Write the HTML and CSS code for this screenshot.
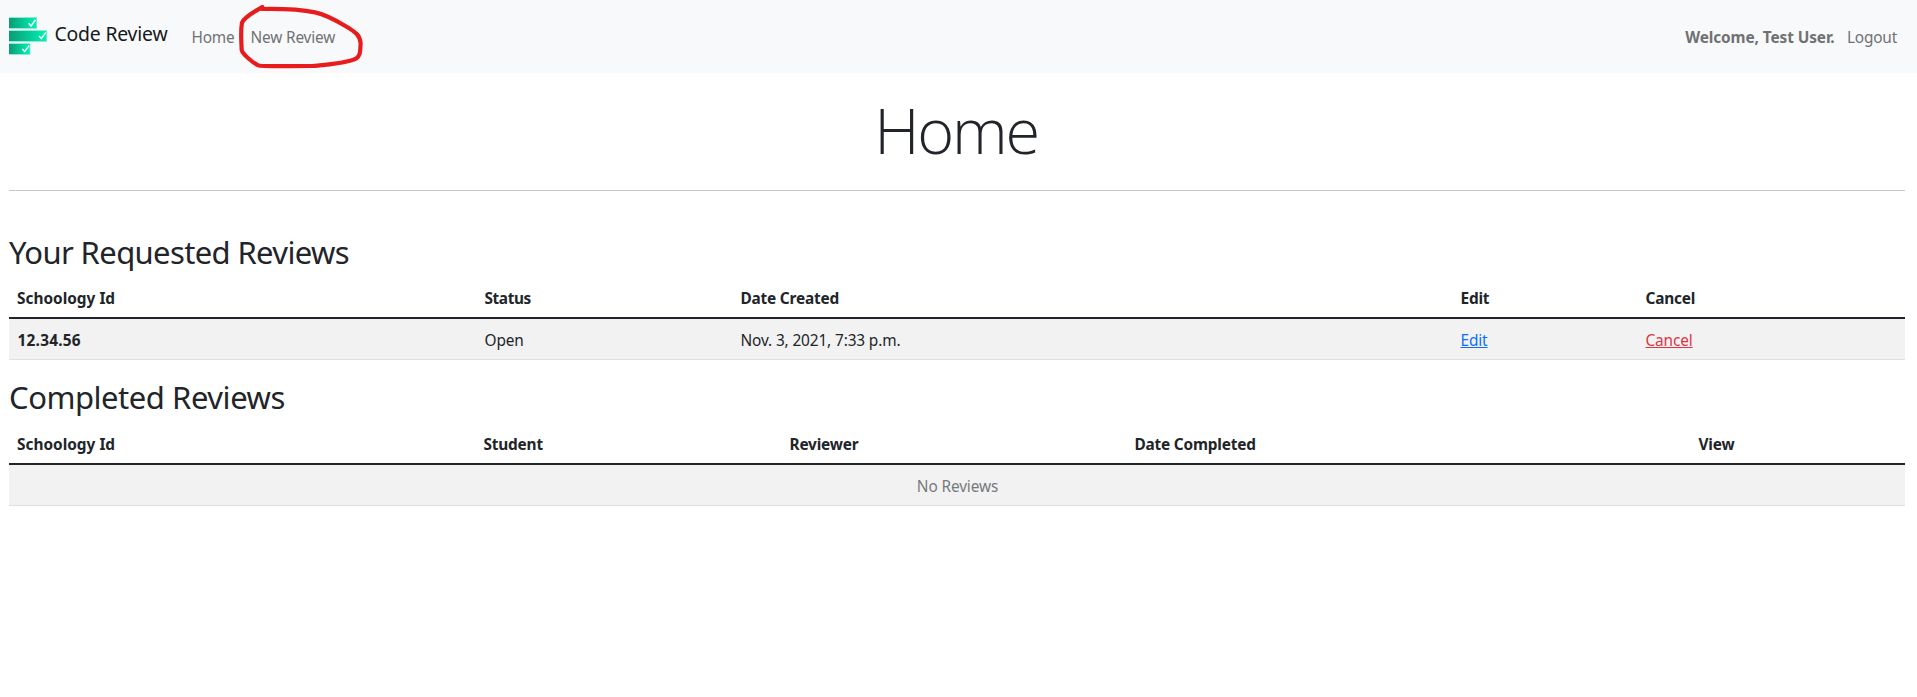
FILE: index.html
```
<!DOCTYPE html>
<html lang="en">
<head>
<meta charset="utf-8">
<title>Code Review</title>
<link rel="stylesheet" href="styles.css">
</head>
<body>
<nav class="navbar">
  <a class="brand" href="#">
    <svg class="logo" width="38" height="38" viewBox="0 0 114 114">
      <defs>
        <linearGradient id="bar"><stop offset="0" stop-color="#0b9b75"/><stop offset="1" stop-color="#00f2b4"/></linearGradient>
      </defs>
      <rect width="84" height="36" fill="#8cebd1"/><rect y="3" width="82" height="30" fill="url(#bar)"/>
      <rect y="39" width="114" height="36" fill="#8cebd1"/><rect y="42" width="112" height="30" fill="url(#bar)"/>
      <rect y="78" width="64" height="36" fill="#8cebd1"/><rect y="81" width="62" height="30" fill="url(#bar)"/>
      <g fill="none" stroke="#fff" stroke-width="4.5">
        <path d="M59 19l7 8 13-18M90 57l7 8 13-18M40 96l7 8 13-18"/>
      </g>
    </svg>
    <span class="brand-name">Code Review</span>
  </a>
  <a class="nav-link nav-home" href="#">Home</a>
  <a class="nav-link nav-new" href="#">New Review
    <svg class="marker" width="130" height="72" viewBox="165 0 390 216">
      <path d="M247 21C225 35 195 48 186 68C181 95 184 120 185 150C188 163 220 190 235 196C245 200 300 198 400 198C430 195 500 190 528 176C543 166 540 150 542 130C540 105 525 95 500 80C470 62 430 42 405 37C370 30 300 26 245 27"/>
    </svg>
  </a>
  <strong class="nav-link welcome">Welcome, Test User.</strong>
  <a class="nav-link logout" href="#">Logout</a>
</nav>
<main class="page">
  <h1 class="title">Home</h1>
  <hr class="rule">
  <section class="requested">
    <h2 class="heading">Your Requested Reviews</h2>
    <table class="table">
      <colgroup><col class="r1"><col class="r2"><col class="r3"><col class="r4"><col></colgroup>
      <thead><tr><th class="wide">Schoology Id</th><th class="tight">Status</th><th>Date Created</th><th>Edit</th><th>Cancel</th></tr></thead>
      <tbody><tr><th class="id">12.34.56</th><td>Open</td><td>Nov. 3, 2021, 7:33 p.m.</td><td><a class="edit" href="#">Edit</a></td><td><a class="cancel" href="#">Cancel</a></td></tr></tbody>
    </table>
  </section>
  <section class="completed">
    <h2 class="heading">Completed Reviews</h2>
    <table class="table">
      <colgroup><col class="c1"><col class="c2"><col class="c3"><col class="c4"><col></colgroup>
      <thead><tr><th class="wide">Schoology Id</th><th>Student</th><th>Reviewer</th><th>Date Completed</th><th>View</th></tr></thead>
      <tbody><tr><td class="empty" colspan="5">No Reviews</td></tr></tbody>
    </table>
  </section>
</main>
</body>
</html>
```
FILE: styles.css
```
* { box-sizing: border-box; }
body {
  margin: 0;
  background: #fff;
  color: #212529;
  font: 15.4px/24px "Noto Sans", sans-serif;
}
.navbar {
  display: flex;
  align-items: flex-start;
  height: 73px;
  padding: 17px 20px 0 9px;
  background: #f8f9fb;
  white-space: nowrap;
}
.navbar a { text-decoration: none; }
.brand {
  display: flex;
  gap: 7.5px;
  width: 182.5px;
  color: #16191c;
}
.logo { flex: none; }
.brand-name {
  padding-top: 2px;
  font-size: 19.4px;
  line-height: 30px;
  letter-spacing: -.2px;
}
.nav-link {
  padding-top: 9px;
  color: #707172;
}
.nav-home { width: 59px; letter-spacing: -.2px; }
.nav-new { position: relative; letter-spacing: -.17px; }
.marker {
  position: absolute;
  left: -15.5px;
  top: -17px;
  fill: none;
  stroke: #e81c1c;
  stroke-width: 12.5;
  stroke-linecap: round;
  stroke-linejoin: round;
  pointer-events: none;
}
.welcome { margin-left: auto; letter-spacing: -.1px; }
.logout { margin-left: 12.5px; letter-spacing: -.2px; }
.page { padding: 18px 12px 0 9px; }
.title {
  margin: 0;
  padding-right: 2px;
  text-align: center;
  font: 300 63px/78px "Open Sans", sans-serif;
  letter-spacing: -2.2px;
}
.rule {
  height: 1px;
  margin: 21px 0 42px;
  border: 0;
  background: #c7c8ca;
}
.heading {
  height: 38px;
  margin: 0 0 6px;
  font-size: 31px;
  font-weight: 400;
  line-height: 38px;
  letter-spacing: -.63px;
}
.completed { margin-top: 18px; }
.completed .heading { margin-bottom: 7px; letter-spacing: -.46px; }
.table {
  width: 100%;
  table-layout: fixed;
  border-collapse: separate;
  border-spacing: 0;
}
.table th, .table td {
  padding: 10px 7.5px 6px 8.5px;
  text-align: left;
  letter-spacing: -.13px;
}
.table th { letter-spacing: -.2px; }
.table tbody th, .table tbody td {
  background: #f2f2f2;
  border-top: 2px solid #212529;
  border-bottom: 1px solid #dee0e2;
}
.table th.wide { padding-left: 8px; letter-spacing: 0; }
.table th.tight { letter-spacing: -.4px; }
.table th.id { letter-spacing: .24px; }
.r1 { width: 467px; }
.r2 { width: 256px; }
.r3 { width: 720px; }
.r4 { width: 185px; }
.c1 { width: 466px; }
.c2 { width: 306px; }
.c3 { width: 345px; }
.c4 { width: 564px; }
.edit { color: #0d6efd; }
.cancel { color: #dc3545; }
.table td.empty { text-align: center; color: #777a7d; }
```
